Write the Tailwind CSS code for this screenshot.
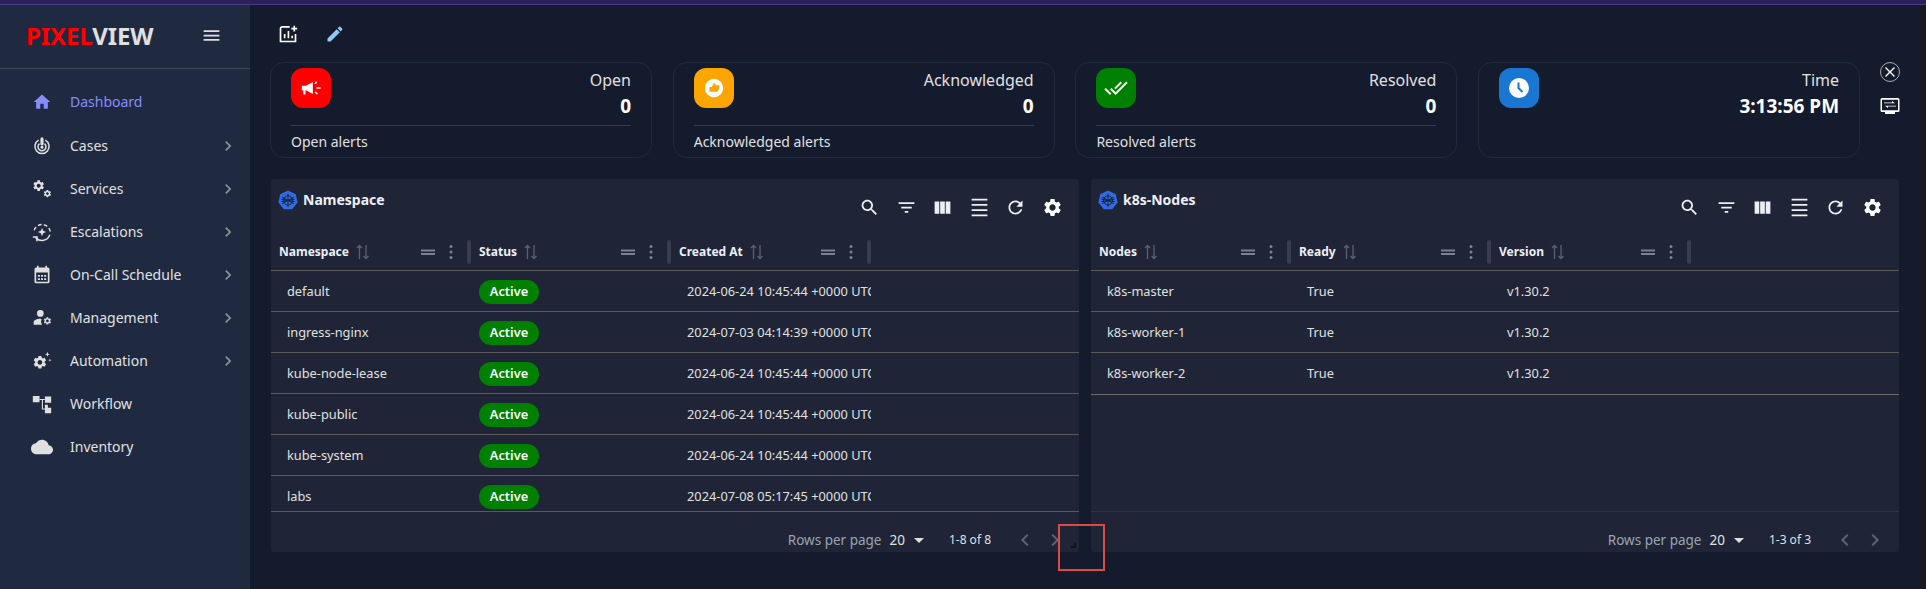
<!DOCTYPE html>
<html lang="en">
<head>
    <meta charset="UTF-8">
    <title>PixelView Dashboard</title>
    <script src="https://cdn.jsdelivr.net/npm/@tailwindcss/browser@4"></script>
</head>
<body class="w-screen h-screen overflow-hidden flex flex-col bg-[#141b2d] text-[#e0e0e0] font-['Noto_Sans',sans-serif]">
    <!-- Shared icons -->
    <svg class="hidden">
        <symbol id="gear" viewBox="0 0 24 24"><path fill="currentColor" d="M19.14 12.94c.04-.3.06-.61.06-.94 0-.32-.02-.64-.07-.94l2.03-1.58c.18-.14.23-.41.12-.61l-1.92-3.32c-.12-.22-.37-.29-.59-.22l-2.39.96c-.5-.38-1.03-.7-1.62-.94l-.36-2.54c-.04-.24-.24-.41-.48-.41h-3.84c-.24 0-.43.17-.47.41l-.36 2.54c-.59.24-1.13.57-1.62.94l-2.39-.96c-.22-.08-.47 0-.59.22L2.74 8.87c-.12.21-.08.47.12.61l2.03 1.58c-.05.3-.09.63-.09.94s.02.64.07.94l-2.03 1.58c-.18.14-.23.41-.12.61l1.92 3.32c.12.22.37.29.59.22l2.39-.96c.5.38 1.03.7 1.62.94l.36 2.54c.05.24.24.41.48.41h3.84c.24 0 .44-.17.47-.41l.36-2.54c.59-.24 1.13-.56 1.62-.94l2.39.96c.22.08.47 0 .59-.22l1.92-3.32c.12-.22.07-.47-.12-.61l-2.01-1.58zM12 15.6c-1.98 0-3.6-1.62-3.6-3.6s1.62-3.6 3.6-3.6 3.6 1.62 3.6 3.6-1.62 3.6-3.6 3.6z"/></symbol>
        <symbol id="chev-r" viewBox="0 0 24 24"><path fill="currentColor" d="M10 6 8.59 7.41 13.17 12l-4.58 4.59L10 18l6-6z"/></symbol>
        <symbol id="chev-l" viewBox="0 0 24 24"><path fill="currentColor" d="M15.41 7.41 14 6l-6 6 6 6 1.41-1.41L10.83 12z"/></symbol>
        <symbol id="caret" viewBox="0 0 24 24"><path fill="currentColor" d="m7 10 5 5 5-5z"/></symbol>
        <symbol id="search" viewBox="0 0 24 24"><path fill="currentColor" d="M15.5 14h-.79l-.28-.27C15.41 12.59 16 11.11 16 9.5 16 5.91 13.09 3 9.5 3S3 5.91 3 9.5 5.91 16 9.5 16c1.61 0 3.09-.59 4.23-1.57l.27.28v.79l5 4.99L20.49 19l-4.99-5zm-6 0C7.01 14 5 11.99 5 9.5S7.01 5 9.5 5 14 7.01 14 9.5 11.99 14 9.5 14z"/></symbol>
        <symbol id="filter" viewBox="0 0 24 24"><path fill="currentColor" d="M10 18h4v-2h-4v2zM3 6v2h18V6H3zm3 7h12v-2H6v2z"/></symbol>
        <symbol id="columns" viewBox="0 0 24 24"><path fill="currentColor" d="M14.67 5v14H9.33V5zm1 14H21V5h-5.33zm-7.34 0V5H3v14z"/></symbol>
        <symbol id="density" viewBox="0 0 24 24"><path fill="currentColor" d="M3 2h18v2H3V2zm0 18h18v2H3v-2zm0-6h18v2H3v-2zm0-6h18v2H3V8z"/></symbol>
        <symbol id="refresh" viewBox="0 0 24 24"><path fill="currentColor" d="M17.65 6.35C16.2 4.9 14.21 4 12 4c-4.42 0-7.99 3.58-7.99 8s3.57 8 7.99 8c3.73 0 6.84-2.55 7.73-6h-2.08c-.82 2.33-3.04 4-5.65 4-3.31 0-6-2.69-6-6s2.69-6 6-6c1.66 0 3.14.69 4.22 1.78L13 11h7V4l-2.35 2.35z"/></symbol>
        <symbol id="sort" viewBox="0 0 16 16"><path fill="none" stroke="currentColor" stroke-width="1.300" d="M4.500 15V1.500M2 4l2.500-2.500L7 4M11 1v13.500M8.500 12l2.500 2.500 2.500-2.500"/></symbol>
        <symbol id="handle" viewBox="0 0 16 16"><path fill="currentColor" d="M1 5.500h14v2H1zM1 9h14v2H1z"/></symbol>
        <symbol id="dots" viewBox="0 0 16 16"><circle cx="8" cy="2.500" r="1.500" fill="currentColor"/><circle cx="8" cy="8" r="1.500" fill="currentColor"/><circle cx="8" cy="13.500" r="1.500" fill="currentColor"/></symbol>
        <symbol id="k8s" viewBox="0 0 24 24">
            <path fill="#326ce5" d="M12 .5 21.300 5 23.500 15 17 23H7L.5 15 2.700 5z"/>
            <g fill="none" stroke="#16233f" stroke-width="1.200"><circle cx="12" cy="12.500" r="5.500"/><path d="M12 4.500v16M5 8.500l14 8M19 8.500l-14 8M4 14l16-3M20 14 4 11"/></g>
        </symbol>
    </svg>

    <!-- Top strip -->
    <div class="h-[5px] shrink-0 bg-[#2d2059] border-b border-[#4a3c8c]"></div>

    <div class="flex flex-1 min-h-0">
        <!-- Sidebar -->
        <aside class="w-[250px] shrink-0 bg-[#1f2a40]">
            <div class="h-[64px] border-b border-[#3d4759] flex items-center justify-between pl-[26px] pr-[28px] pb-[2px]">
                <div class="text-[24px] leading-none font-bold tracking-[-0.1px]"><span class="text-[#ff0000]">PIXEL</span><span class="text-[#e0e0e0]">VIEW</span></div>
                <svg class="w-[21px] h-[21px]" viewBox="0 0 24 24"><path fill="currentColor" d="M3 18h18v-2H3zm0-5h18v-2H3zm0-7v2h18V6z"/></svg>
            </div>
            <nav class="pt-[12px] text-[14px]">
                <a class="h-[43px] flex items-center pl-[32px] pr-[12px] gap-[18px] text-[#868dfb] -mt-px mb-px">
                    <svg class="w-5 h-5" viewBox="0 0 24 24"><path fill="currentColor" d="M10 20v-6h4v6h5v-8h3L12 3 2 12h3v8z"/></svg>
                    <span class="flex-1">Dashboard</span>
                </a>
                <a class="h-[43px] flex items-center pl-[32px] pr-[12px] gap-[18px]">
                    <svg class="w-5 h-5" viewBox="0 0 24 24" fill="none" stroke="currentColor" stroke-width="1.800"><path d="M8 5A8.500 8.500 0 1 0 16 5"/><path d="M9 9.200A4.800 4.800 0 1 0 15 9.200"/><rect x="11" y="2.500" width="2" height="8" rx="1" fill="currentColor"/><circle cx="12" cy="13.500" r="1" fill="currentColor"/></svg>
                    <span class="flex-1">Cases</span>
                    <svg class="w-5 h-5 text-[#8c9097]"><use href="#chev-r"/></svg>
                </a>
                <a class="h-[43px] flex items-center pl-[32px] pr-[12px] gap-[18px]">
                    <svg class="w-5 h-5" viewBox="0 0 24 24"><use href="#gear" x="0" y="0" width="16" height="16"/><use href="#gear" x="13" y="12" width="11" height="11"/></svg>
                    <span class="flex-1">Services</span>
                    <svg class="w-5 h-5 text-[#8c9097]"><use href="#chev-r"/></svg>
                </a>
                <a class="h-[43px] flex items-center pl-[32px] pr-[12px] gap-[18px]">
                    <svg class="w-[22px] h-[22px] -mx-px" viewBox="0 0 24 24" fill="none" stroke="currentColor" stroke-width="1.600"><path stroke-dasharray="4 2.500" d="M3.500 10A9 9 0 0 1 21 12"/><path d="M20.500 15A9 9 0 0 1 5 18"/><path d="M2 17.500h4.500V22" stroke-width="1.800"/><path fill="currentColor" stroke="none" d="m12 7.500 1.300 3.200 3.200 1.300-3.200 1.300L12 16.500l-1.300-3.200L7.500 12l3.200-1.300z"/></svg>
                    <span class="flex-1">Escalations</span>
                    <svg class="w-5 h-5 text-[#8c9097]"><use href="#chev-r"/></svg>
                </a>
                <a class="h-[43px] flex items-center pl-[32px] pr-[12px] gap-[18px]">
                    <svg class="w-5 h-5" viewBox="0 0 24 24"><path fill="currentColor" fill-rule="evenodd" d="M6 1h2v2h8V1h2v2h1a2 2 0 0 1 2 2v15a2 2 0 0 1-2 2H5a2 2 0 0 1-2-2V5a2 2 0 0 1 2-2h1zM5 9v11h14V9zm2 3h2.500v2H7zm3.800 0h2.400v2h-2.400zm3.700 0H17v2h-2.500zM7 16h2.500v2H7zm3.800 0h2.400v2h-2.400zm3.700 0H17v2h-2.500z"/></svg>
                    <span class="flex-1">On-Call Schedule</span>
                    <svg class="w-5 h-5 text-[#8c9097]"><use href="#chev-r"/></svg>
                </a>
                <a class="h-[43px] flex items-center pl-[32px] pr-[12px] gap-[18px]">
                    <svg class="w-5 h-5" viewBox="0 0 24 24"><circle cx="10" cy="6.500" r="4" fill="currentColor"/><path fill="currentColor" d="M2 20v-2.500c0-3 4-4.500 8-4.500l1.500.1A7 7 0 0 0 12 20z"/><use href="#gear" x="13" y="10" width="11" height="11"/></svg>
                    <span class="flex-1">Management</span>
                    <svg class="w-5 h-5 text-[#8c9097]"><use href="#chev-r"/></svg>
                </a>
                <a class="h-[43px] flex items-center pl-[32px] pr-[12px] gap-[18px]">
                    <svg class="w-5 h-5" viewBox="0 0 24 24"><use href="#gear" x="0" y="4" width="19" height="19"/><path fill="currentColor" d="m18.500 1 .8 2.200 2.200.8-2.200.8-.8 2.200-.8-2.200-2.200-.8 2.200-.8zM21.500 9l.5 1.500 1.500.5-1.500.5-.5 1.500-.5-1.500-1.500-.5 1.500-.5z"/></svg>
                    <span class="flex-1">Automation</span>
                    <svg class="w-5 h-5 text-[#8c9097]"><use href="#chev-r"/></svg>
                </a>
                <a class="h-[43px] flex items-center pl-[32px] pr-[12px] gap-[18px]">
                    <svg class="w-5 h-5" viewBox="0 0 24 24"><path fill="currentColor" d="M1 2.500h8V10H1zM15.500 3H23v7.500h-7.500zM15.500 13H19v3.500h4V23h-7.500z"/><path fill="none" stroke="currentColor" stroke-width="1.300" d="M9 6.500h6.500M12.500 6.500V18h3"/></svg>
                    <span class="flex-1">Workflow</span>
                </a>
                <a class="h-[43px] flex items-center pl-[32px] pr-[12px] gap-[18px]">
                    <svg class="w-[22px] h-[22px] -mx-px" viewBox="0 0 24 24"><path fill="currentColor" d="M19.350 10.040C18.670 6.590 15.640 4 12 4 9.110 4 6.600 5.640 5.350 8.040 2.340 8.360 0 10.910 0 14c0 3.310 2.690 6 6 6h13c2.760 0 5-2.240 5-5 0-2.640-2.050-4.780-4.650-4.960z"/></svg>
                    <span class="flex-1">Inventory</span>
                </a>
            </nav>
        </aside>

        <!-- Main -->
        <main class="flex-1 min-w-0 pl-5">
            <div class="h-[57px] flex items-center gap-[27px] pl-[8px]">
                <svg class="w-5 h-5 text-white" viewBox="0 0 24 24" fill="none" stroke="currentColor" stroke-width="2"><path d="M14 3.500H5a2 2 0 0 0-2 2V21h18v-9"/><path d="M8 17v-5M12.500 17V8.500M17 17v-3"/><path d="M16 5.500h7M19.500 2v7"/></svg>
                <svg class="w-5 h-5 text-[#90caf9]" viewBox="0 0 24 24"><path fill="currentColor" d="M3 17.250V21h3.750L17.810 9.940l-3.750-3.750L3 17.250zM20.710 7.040c.39-.39.39-1.020 0-1.410l-2.340-2.340c-.39-.39-1.020-.39-1.410 0l-1.830 1.830 3.750 3.750 1.830-1.830z"/></svg>
            </div>

            <!-- Stat cards -->
            <div class="flex h-[96px]">
                <div class="flex gap-[20.700px]">
                    <div class="w-[382px] h-[96px] rounded-[14px] border border-[#1f2a3d] px-[20px]">
                        <div class="h-[63px] flex justify-between pt-[5px] border-b border-[#353b4c]">
                            <div class="w-10 h-10 rounded-xl bg-[#ff0000] flex items-center justify-center">
                                <svg class="w-[22px] h-[22px] text-white" viewBox="0 0 24 24"><path fill="currentColor" d="M2 9.500h4.500L14 5.500v13l-7.500-4H6V19H3.500v-4.500H2z"/><path fill="none" stroke="currentColor" stroke-width="1.800" d="M16.500 7.500 18 5M18 12h4.500M16.500 16.500 19 18.500"/></svg>
                            </div>
                            <div class="text-right">
                                <div class="text-[16px] leading-6">Open</div>
                                <div class="text-[19px] leading-[27px] font-bold text-white pt-[1px]">0</div>
                            </div>
                        </div>
                        <div class="text-[14px] leading-5 pt-[6px]">Open alerts</div>
                    </div>
                    <div class="w-[382px] h-[96px] rounded-[14px] border border-[#1f2a3d] px-[20px]">
                        <div class="h-[63px] flex justify-between pt-[5px] border-b border-[#353b4c]">
                            <div class="w-10 h-10 rounded-xl bg-[#ffa500] flex items-center justify-center">
                                <svg class="w-[22px] h-[22px]" viewBox="0 0 24 24"><circle cx="12" cy="12" r="10" fill="#fff"/><path fill="#ffa500" d="M7 11h2.500l2.500-4.500c1.500 0 2 1 1.700 2.500H17c.8 0 1.200.6 1 1.300l-1.500 5c-.2.500-.6.700-1 .7H7z"/></svg>
                            </div>
                            <div class="text-right">
                                <div class="text-[16px] leading-6">Acknowledged</div>
                                <div class="text-[19px] leading-[27px] font-bold text-white pt-[1px]">0</div>
                            </div>
                        </div>
                        <div class="text-[14px] leading-5 pt-[6px]">Acknowledged alerts</div>
                    </div>
                    <div class="w-[382px] h-[96px] rounded-[14px] border border-[#1f2a3d] px-[20px]">
                        <div class="h-[63px] flex justify-between pt-[5px] border-b border-[#353b4c]">
                            <div class="w-10 h-10 rounded-xl bg-[#008000] flex items-center justify-center">
                                <svg class="w-[24px] h-[24px] text-white" viewBox="0 0 24 24"><path fill="currentColor" d="M18 7l-1.410-1.410-6.340 6.340 1.410 1.410L18 7zm4.240-1.410L11.660 16.170 7.480 12l-1.410 1.410L11.660 19l12-12-1.420-1.410zM.41 13.410 6 19l1.410-1.410L1.830 12 .41 13.410z"/></svg>
                            </div>
                            <div class="text-right">
                                <div class="text-[16px] leading-6">Resolved</div>
                                <div class="text-[19px] leading-[27px] font-bold text-white pt-[1px]">0</div>
                            </div>
                        </div>
                        <div class="text-[14px] leading-5 pt-[6px]">Resolved alerts</div>
                    </div>
                    <div class="w-[382px] h-[96px] rounded-[14px] border border-[#1f2a3d] px-[20px]">
                        <div class="h-[63px] flex justify-between pt-[5px]">
                            <div class="w-10 h-10 rounded-xl bg-[#1976d2] flex items-center justify-center">
                                <svg class="w-[24px] h-[24px]" viewBox="0 0 24 24"><circle cx="12" cy="12" r="10" fill="#fff"/><path fill="none" stroke="#1976d2" stroke-width="2" d="M11.500 6.500V12l4 4"/></svg>
                            </div>
                            <div class="text-right">
                                <div class="text-[16px] leading-6">Time</div>
                                <div class="text-[19px] leading-[27px] font-bold text-white pt-[1px]">3:13:56 PM</div>
                            </div>
                        </div>
                    </div>
                </div>
                <div class="ml-[20px] flex flex-col items-center gap-[14px]">
                    <svg class="w-5 h-5 text-white" viewBox="0 0 20 20" fill="none" stroke="currentColor"><circle cx="10" cy="10" r="9.500" stroke="#a9adb5" stroke-width="1"/><path stroke-width="1.400" d="m5.500 5.500 9 9M14.500 5.500l-9 9"/></svg>
                    <svg class="w-5 h-5 text-white" viewBox="0 0 20 20"><path fill="currentColor" fill-rule="evenodd" d="M2 2h16a1.500 1.500 0 0 1 1.500 1.500v11A1.500 1.500 0 0 1 18 16h-3v2H5v-2H2A1.500 1.500 0 0 1 .5 14.500v-11A1.500 1.500 0 0 1 2 2zm0 1.700v10.600h16V3.700zM4 6.500h8V5l3 2.200H4zM16 10.500H8V12L5 9.800h11z"/></svg>
                </div>
            </div>

            <!-- Tables -->
            <div class="flex gap-3 mt-[21px] ml-[1px]">
                <!-- Namespace -->
                <section class="relative w-[808px] h-[373px] rounded-[3px] bg-[#1f2536] flex flex-col">
                    <div class="h-[52px] shrink-0 flex justify-between pl-[7px] pr-[16.500px]">
                        <div class="flex items-center gap-[5px] h-[41px]">
                            <svg class="w-5 h-5"><use href="#k8s"/></svg>
                            <span class="text-[14px] font-bold text-[#eceff4]">Namespace</span>
                        </div>
                        <div class="flex items-center gap-[15.500px] h-[56px] text-[#eceff4]">
                            <svg class="w-[21px] h-[21px]"><use href="#search"/></svg>
                            <svg class="w-[21px] h-[21px]"><use href="#filter"/></svg>
                            <svg class="w-[21px] h-[21px]"><use href="#columns"/></svg>
                            <svg class="w-[21px] h-[21px]"><use href="#density"/></svg>
                            <svg class="w-[21px] h-[21px]"><use href="#refresh"/></svg>
                            <svg class="w-[21px] h-[21px] text-white"><use href="#gear"/></svg>
                        </div>
                    </div>
                    <div class="h-[40px] shrink-0 flex items-center border-b border-[#5a5a5a] text-[12px] font-bold text-[#eceff4]">
                        <div class="w-[200px] h-full flex items-center pl-2 pt-[2px]">
                            <span>Namespace</span>
                            <svg class="w-4 h-4 ml-[6px] text-[#596072]"><use href="#sort"/></svg>
                            <svg class="w-4 h-4 ml-auto mr-[7px] text-[#7b8190]"><use href="#handle"/></svg>
                            <svg class="w-4 h-4 mr-[8px] text-[#7b8190]"><use href="#dots"/></svg>
                            <div class="w-1 h-6 rounded-sm bg-[#383e4f]"></div>
                        </div>
                        <div class="w-[200px] h-full flex items-center pl-2 pt-[2px]">
                            <span>Status</span>
                            <svg class="w-4 h-4 ml-[6px] text-[#596072]"><use href="#sort"/></svg>
                            <svg class="w-4 h-4 ml-auto mr-[7px] text-[#7b8190]"><use href="#handle"/></svg>
                            <svg class="w-4 h-4 mr-[8px] text-[#7b8190]"><use href="#dots"/></svg>
                            <div class="w-1 h-6 rounded-sm bg-[#383e4f]"></div>
                        </div>
                        <div class="w-[200px] h-full flex items-center pl-2 pt-[2px]">
                            <span>Created At</span>
                            <svg class="w-4 h-4 ml-[6px] text-[#596072]"><use href="#sort"/></svg>
                            <svg class="w-4 h-4 ml-auto mr-[7px] text-[#7b8190]"><use href="#handle"/></svg>
                            <svg class="w-4 h-4 mr-[8px] text-[#7b8190]"><use href="#dots"/></svg>
                            <div class="w-1 h-6 rounded-sm bg-[#383e4f]"></div>
                        </div>
                    </div>
                    <div class="h-[241px] shrink-0 overflow-hidden border-b border-[#5a5a5a] text-[12.800px]">
                        <div class="h-[41px] pt-[1px] flex items-center border-b border-[#5a5a5a]">
                            <div class="w-[200px] pl-4">default</div>
                            <div class="w-[200px] pl-2"><span class="inline-flex w-[60px] h-6 items-center justify-center rounded-full bg-[#008000] text-white font-semibold">Active</span></div>
                            <div class="w-[200px] pl-4 overflow-hidden whitespace-nowrap">2024-06-24 10:45:44 +0000 UTC</div>
                        </div>
                        <div class="h-[41px] pt-[1px] flex items-center border-b border-[#5a5a5a]">
                            <div class="w-[200px] pl-4">ingress-nginx</div>
                            <div class="w-[200px] pl-2"><span class="inline-flex w-[60px] h-6 items-center justify-center rounded-full bg-[#008000] text-white font-semibold">Active</span></div>
                            <div class="w-[200px] pl-4 overflow-hidden whitespace-nowrap">2024-07-03 04:14:39 +0000 UTC</div>
                        </div>
                        <div class="h-[41px] pt-[1px] flex items-center border-b border-[#5a5a5a]">
                            <div class="w-[200px] pl-4">kube-node-lease</div>
                            <div class="w-[200px] pl-2"><span class="inline-flex w-[60px] h-6 items-center justify-center rounded-full bg-[#008000] text-white font-semibold">Active</span></div>
                            <div class="w-[200px] pl-4 overflow-hidden whitespace-nowrap">2024-06-24 10:45:44 +0000 UTC</div>
                        </div>
                        <div class="h-[41px] pt-[1px] flex items-center border-b border-[#5a5a5a]">
                            <div class="w-[200px] pl-4">kube-public</div>
                            <div class="w-[200px] pl-2"><span class="inline-flex w-[60px] h-6 items-center justify-center rounded-full bg-[#008000] text-white font-semibold">Active</span></div>
                            <div class="w-[200px] pl-4 overflow-hidden whitespace-nowrap">2024-06-24 10:45:44 +0000 UTC</div>
                        </div>
                        <div class="h-[41px] pt-[1px] flex items-center border-b border-[#5a5a5a]">
                            <div class="w-[200px] pl-4">kube-system</div>
                            <div class="w-[200px] pl-2"><span class="inline-flex w-[60px] h-6 items-center justify-center rounded-full bg-[#008000] text-white font-semibold">Active</span></div>
                            <div class="w-[200px] pl-4 overflow-hidden whitespace-nowrap">2024-06-24 10:45:44 +0000 UTC</div>
                        </div>
                        <div class="h-[41px] pt-[1px] flex items-center border-b border-[#5a5a5a]">
                            <div class="w-[200px] pl-4">labs</div>
                            <div class="w-[200px] pl-2"><span class="inline-flex w-[60px] h-6 items-center justify-center rounded-full bg-[#008000] text-white font-semibold">Active</span></div>
                            <div class="w-[200px] pl-4 overflow-hidden whitespace-nowrap">2024-07-08 05:17:45 +0000 UTC</div>
                        </div>
                    </div>
                    <div class="flex-1 flex items-center justify-end pt-[16px] pr-[12px] text-[13.500px]">
                        <span class="text-[#9aa3b2]">Rows per page</span>
                        <span class="ml-2">20</span>
                        <svg class="w-6 h-6 ml-[2px]"><use href="#caret"/></svg>
                        <span class="ml-[18px] text-[12px]">1-8 of 8</span>
                        <svg class="w-6 h-6 ml-[22px] text-[#5c6373]"><use href="#chev-l"/></svg>
                        <svg class="w-6 h-6 ml-[6px] text-[#5c6373]"><use href="#chev-r"/></svg>
                    </div>
                    <!-- Resize corner -->
                    <div class="absolute right-[3px] bottom-[4px] w-[5px] h-[5px] border-r-2 border-b-2 border-[#10141f]"></div>
                    <!-- Annotation box -->
                    <div class="absolute left-[787px] top-[345px] w-[47px] h-[47px] border-2 border-[#e04848]"></div>
                </section>

                <!-- k8s-Nodes -->
                <section class="w-[808px] h-[373px] rounded-[3px] bg-[#1f2536] flex flex-col">
                    <div class="h-[52px] shrink-0 flex justify-between pl-[7px] pr-[16.500px]">
                        <div class="flex items-center gap-[5px] h-[41px]">
                            <svg class="w-5 h-5"><use href="#k8s"/></svg>
                            <span class="text-[14px] font-bold text-[#eceff4]">k8s-Nodes</span>
                        </div>
                        <div class="flex items-center gap-[15.500px] h-[56px] text-[#eceff4]">
                            <svg class="w-[21px] h-[21px]"><use href="#search"/></svg>
                            <svg class="w-[21px] h-[21px]"><use href="#filter"/></svg>
                            <svg class="w-[21px] h-[21px]"><use href="#columns"/></svg>
                            <svg class="w-[21px] h-[21px]"><use href="#density"/></svg>
                            <svg class="w-[21px] h-[21px]"><use href="#refresh"/></svg>
                            <svg class="w-[21px] h-[21px] text-white"><use href="#gear"/></svg>
                        </div>
                    </div>
                    <div class="h-[40px] shrink-0 flex items-center border-b border-[#5a5a5a] text-[12px] font-bold text-[#eceff4]">
                        <div class="w-[200px] h-full flex items-center pl-2 pt-[2px]">
                            <span>Nodes</span>
                            <svg class="w-4 h-4 ml-[6px] text-[#596072]"><use href="#sort"/></svg>
                            <svg class="w-4 h-4 ml-auto mr-[7px] text-[#7b8190]"><use href="#handle"/></svg>
                            <svg class="w-4 h-4 mr-[8px] text-[#7b8190]"><use href="#dots"/></svg>
                            <div class="w-1 h-6 rounded-sm bg-[#383e4f]"></div>
                        </div>
                        <div class="w-[200px] h-full flex items-center pl-2 pt-[2px]">
                            <span>Ready</span>
                            <svg class="w-4 h-4 ml-[6px] text-[#596072]"><use href="#sort"/></svg>
                            <svg class="w-4 h-4 ml-auto mr-[7px] text-[#7b8190]"><use href="#handle"/></svg>
                            <svg class="w-4 h-4 mr-[8px] text-[#7b8190]"><use href="#dots"/></svg>
                            <div class="w-1 h-6 rounded-sm bg-[#383e4f]"></div>
                        </div>
                        <div class="w-[200px] h-full flex items-center pl-2 pt-[2px]">
                            <span>Version</span>
                            <svg class="w-4 h-4 ml-[6px] text-[#596072]"><use href="#sort"/></svg>
                            <svg class="w-4 h-4 ml-auto mr-[7px] text-[#7b8190]"><use href="#handle"/></svg>
                            <svg class="w-4 h-4 mr-[8px] text-[#7b8190]"><use href="#dots"/></svg>
                            <div class="w-1 h-6 rounded-sm bg-[#383e4f]"></div>
                        </div>
                    </div>
                    <div class="h-[241px] shrink-0 overflow-hidden border-b border-[#2d3344] text-[12.800px]">
                        <div class="h-[41px] pt-[1px] flex items-center border-b border-[#5a5a5a]">
                            <div class="w-[200px] pl-4">k8s-master</div>
                            <div class="w-[200px] pl-4">True</div>
                            <div class="w-[200px] pl-4">v1.30.2</div>
                        </div>
                        <div class="h-[41px] pt-[1px] flex items-center border-b border-[#5a5a5a]">
                            <div class="w-[200px] pl-4">k8s-worker-1</div>
                            <div class="w-[200px] pl-4">True</div>
                            <div class="w-[200px] pl-4">v1.30.2</div>
                        </div>
                        <div class="h-[42px] pt-[1px] flex items-center border-b border-[#6a6a6a]">
                            <div class="w-[200px] pl-4">k8s-worker-2</div>
                            <div class="w-[200px] pl-4">True</div>
                            <div class="w-[200px] pl-4">v1.30.2</div>
                        </div>
                    </div>
                    <div class="flex-1 flex items-center justify-end pt-[16px] pr-[12px] text-[13.500px]">
                        <span class="text-[#9aa3b2]">Rows per page</span>
                        <span class="ml-2">20</span>
                        <svg class="w-6 h-6 ml-[2px]"><use href="#caret"/></svg>
                        <span class="ml-[18px] text-[12px]">1-3 of 3</span>
                        <svg class="w-6 h-6 ml-[22px] text-[#5c6373]"><use href="#chev-l"/></svg>
                        <svg class="w-6 h-6 ml-[6px] text-[#5c6373]"><use href="#chev-r"/></svg>
                    </div>
                </section>
            </div>
        </main>

        <!-- Window edge -->
        <div class="w-[6px] shrink-0 bg-[#16181d]"></div>
    </div>
</body>
</html>
